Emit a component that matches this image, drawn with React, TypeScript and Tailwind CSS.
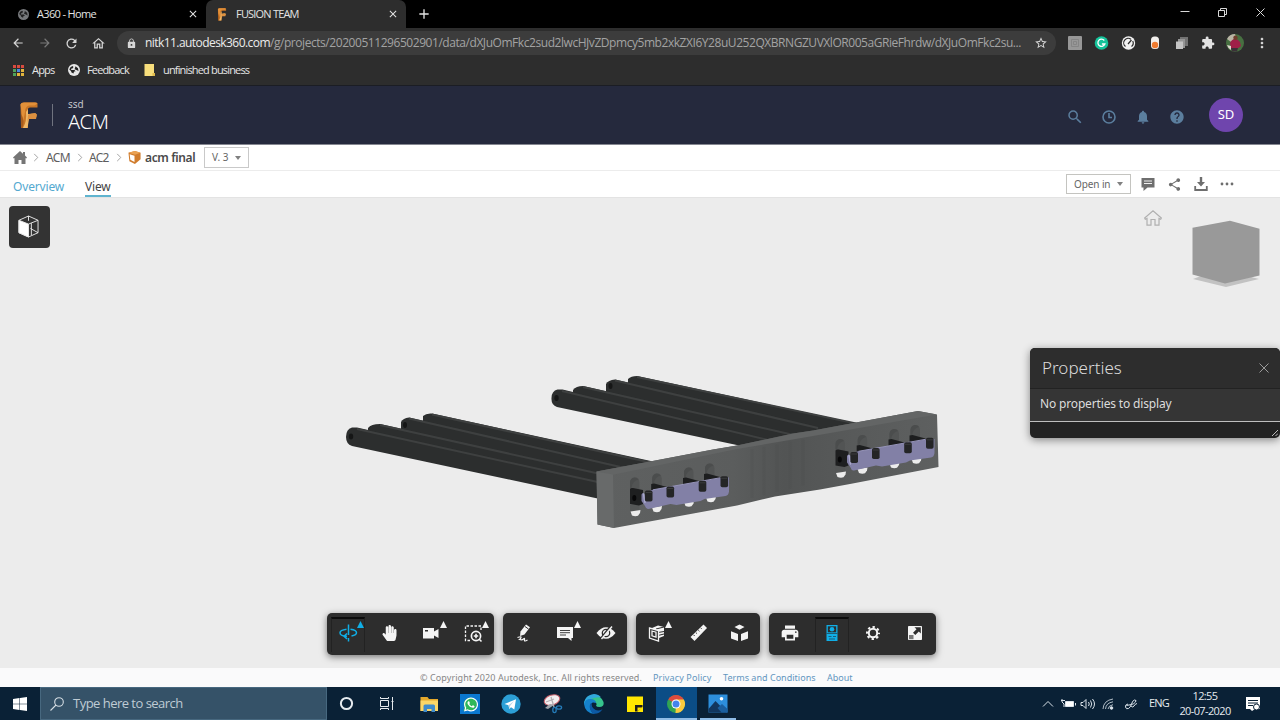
import React from "react";
import {
  MdArrowBack, MdArrowForward, MdRefresh, MdOutlineHome, MdLock, MdStarBorder, MdExtension, MdMoreVert,
  MdSearch, MdNotifications, MdHelp, MdShare, MdPrint, MdAdd, MdClose,
} from "react-icons/md";
import { FaHandPaper, FaWhatsapp } from "react-icons/fa";

const SEGOE = "font-['Open_Sans','Noto_Sans',sans-serif]";
const ADSK = "font-['Noto_Sans','Open_Sans',sans-serif]";

function Globe({ className }: { className: string }) {
  return (
    <svg viewBox="0 0 12 12" className={className}>
      <circle cx="6" cy="6" r="6" fill="currentColor" />
      <path d="M1.300 5.500Q2 2.500 4.500 2l1 1-1 1.500H3.500L3 6h3.500l1 1.500H6L5.500 9.500 3.500 8.500 3 7zM7.500 2.200l2.500 2L10.500 7 8.500 6l-2-.8.500-1.200z" fill="#222" />
    </svg>
  );
}

function FusionLogo({ className }: { className: string }) {
  return (
    <svg viewBox="0 0 18 27" className={className}>
      <path d="M.5 2.500Q1 .5 4 .5h11q2 0 2.500 1v4H10Q8 5.500 8 7v19H1z" fill="#c87627" />
      <path d="M.5 2.500Q1 .5 4 .5h11q2 0 2.500 1l-3 2H9Q5 4.500 5 10L3 20z" fill="#e29039" />
      <path d="M6 10l2-3v5l8-.5.5 3L9 17l-1.500 9H3Q7 19 6 10z" fill="#f0b868" />
      <path d="M8 12.500q4-1.500 7-1.500l2 1.500-1 4.500H9l-1.500 3z" fill="#dc9040" />
      <path d="M1 12Q5 18 2.500 26H1z" fill="#a85c1c" />
    </svg>
  );
}

function TabStrip() {
  return (
    <div className={`flex h-[28px] shrink-0 bg-black text-[11px] text-[#e3e3e3] ${SEGOE}`}>
      <div className="flex w-[206px] items-center pl-[18px] pr-[7px]">
        <Globe className="h-[11px] w-[11px] text-[#77797c]" />
        <span className="ml-[8px] flex-1 tracking-[-0.65px]">A360 - Home</span>
        <MdClose className="h-[12px] w-[12px]" />
      </div>
      <div className="flex w-[200px] items-center rounded-t-[7px] bg-[#2d2d2d] pl-[11px] pr-[7px]">
        <FusionLogo className="h-[13px] w-[10px]" />
        <span className="ml-[9px] flex-1 tracking-[-0.8px]">FUSION TEAM</span>
        <MdClose className="h-[12px] w-[12px]" />
      </div>
      <div className="flex flex-1 items-center pl-[10px]">
        <MdAdd className="h-[16px] w-[16px]" />
      </div>
      <svg viewBox="0 0 110 28" className="h-[28px] w-[110px]" fill="none" stroke="#d8d8d8">
        <path d="M10.500 11.500h9M48.500 10.500h6v6h-6zM50.500 10v-1.500h6v6h-2M86.500 8.500l8 8M94.500 8.500l-8 8" />
      </svg>
    </div>
  );
}

function AddressBar() {
  return (
    <div className={`flex h-[30px] shrink-0 items-center bg-[#2d2d2d] pl-[11px] text-[#d6d6d6] ${SEGOE}`}>
      <MdArrowBack className="h-[14px] w-[14px]" />
      <MdArrowForward className="ml-[13px] h-[14px] w-[14px] text-[#7a7a7a]" />
      <MdRefresh className="ml-[12px] h-[15px] w-[15px]" />
      <MdOutlineHome className="ml-[12px] h-[15px] w-[15px]" />
      <div className="ml-[11px] flex h-[24px] w-[939px] items-center rounded-full bg-[#3c3c3c] pl-[9px] pr-[8px]">
        <MdLock className="h-[11px] w-[11px]" />
        <span className="ml-[8px] w-[885px] whitespace-nowrap text-[12px] tracking-[-0.445px] text-[#a3a3a3]">
          <span className="tracking-[-0.56px] text-[#ececec]">nitk11.autodesk360.com</span>
          /g/projects/20200511296502901/data/dXJuOmFkc2sud2lwcHJvZDpmcy5mb2xkZXI6Y28uU252QXBRNGZUVXlOR005aGRieFhrdw/dXJuOmFkc2su...
        </span>
        <MdStarBorder className="ml-[4px] h-[14px] w-[14px] shrink-0" />
      </div>
      <svg viewBox="0 0 224 30" className="h-[30px] w-[224px]">
        <rect x="12" y="8" width="14" height="14" rx="1" fill="#979797" />
        <path d="M15.500 11.500h7v7h-7zM17.500 13.500h3v3h-3z" fill="none" stroke="#858585" />
        <circle cx="45.500" cy="15" r="6.800" fill="#15c39a" />
        <path d="M48.300 12.500a3.600 3.600 0 1 0 .6 3.500h-3" fill="none" stroke="#fff" strokeWidth="1.300" />
        <circle cx="72.500" cy="15" r="6.700" fill="#f2f2f2" />
        <path d="M69.500 18.500a4.500 4.500 0 0 1 5.500-7.200M76.700 13a4.500 4.500 0 0 1-1.200 5.500M72 16l3.500-4" fill="none" stroke="#2b2b2b" strokeWidth="1.200" />
        <rect x="95" y="8.500" width="8" height="12.500" rx="3.500" fill="#f1efec" />
        <circle cx="99" cy="17" r="3.200" fill="#ee7b30" />
        <path d="M124 9h8v9h-8z" fill="#737373" />
        <path d="M122 11h7v9h-7z" fill="#969696" />
        <path d="M120 13.500h7V21h-7z" fill="#c4c4c4" />
      </svg>
      <MdExtension className="-ml-[79px] h-[14px] w-[14px] text-[#e2e2e2]" />
      <svg viewBox="0 0 18 18" className="ml-[11px] h-[18px] w-[18px]">
        <circle cx="9" cy="9" r="9" fill="#477041" />
        <path d="M9 0a9 9 0 0 0-8 5l4 3 5-5z" fill="#b9b4a4" />
        <path d="M4 9q2-4 5-4t5 3l1 4-4 3H5z" fill="#a01f48" />
        <circle cx="9.500" cy="3.800" r="2.200" fill="#6e3d2c" />
        <path d="M1 11l4 1v4a8 8 0 0 1-4-5z" fill="#dfd7cf" />
        <path d="M5 14h7l-1 3.500H6z" fill="#3b3038" />
      </svg>
      <MdMoreVert className="ml-[10px] h-[16px] w-[16px] shrink-0" />
    </div>
  );
}

const APP_DOTS = ["#d94b3f", "#d94b3f", "#d94b3f", "#4fa45a", "#4a86e0", "#e3b53c", "#4fa45a", "#e3b53c", "#e3b53c"];

function Bookmarks() {
  return (
    <div className={`flex h-[28px] shrink-0 items-center border-b border-[#1b1d24] bg-[#2d2d2d] pb-[3px] pl-[13px] text-[11px] text-[#e6e6e6] ${SEGOE}`}>
      <svg viewBox="0 0 11 11" className="h-[11px] w-[11px]">
        {APP_DOTS.map((c, i) => (
          <rect key={i} x={(i % 3) * 4} y={Math.floor(i / 3) * 4} width="3" height="3" fill={c} />
        ))}
      </svg>
      <span className="ml-[8px] w-[36px] tracking-[-0.8px]">Apps</span>
      <Globe className="h-[12px] w-[12px] text-[#e6e6e6]" />
      <span className="ml-[7px] w-[57px] tracking-[-0.85px]">Feedback</span>
      <svg viewBox="0 0 11 12" className="h-[12px] w-[11px]">
        <path d="M.5 0H10v9l1 1v2H.5z" fill="#f7de7c" />
        <path d="M8.500 9H11v3H8.500z" fill="#dfba4c" />
      </svg>
      <span className="ml-[8px] tracking-[-0.84px]">unfinished business</span>
    </div>
  );
}

function AppHeader() {
  return (
    <header className={`flex h-[59px] shrink-0 items-center border-b border-[#858791] bg-[#25293d] pl-[20px] pr-[37px] ${ADSK}`}>
      <FusionLogo className="h-[27px] w-[18px]" />
      <div className="ml-[14px] h-[22px] w-px bg-[#70737f]" />
      <div className="ml-[15px] flex flex-1 flex-col">
        <span className="relative top-px text-[10px] leading-[13px] text-[#c3c5cc]">ssd</span>
        <span className="text-[20px] font-light leading-[23px] tracking-[-0.3px] text-white">ACM</span>
      </div>
      <div className="flex items-center gap-[18px] pt-[3px] text-[#5b7e9e]">
        <MdSearch className="h-[18px] w-[18px]" />
        <svg viewBox="0 0 16 16" className="-ml-px h-[16px] w-[16px]" fill="none" stroke="currentColor" strokeWidth="1.600">
          <circle cx="8" cy="8" r="6" />
          <path d="M8 4v4.500h3" />
        </svg>
        <MdNotifications className="h-[16px] w-[16px]" />
        <MdHelp className="h-[16px] w-[16px]" />
      </div>
      <div className="ml-[24px] flex h-[34px] w-[34px] items-center justify-center rounded-full bg-[#6f45ad] text-[13px] text-white">SD</div>
    </header>
  );
}

function Chevron() {
  return (
    <svg viewBox="0 0 6 10" className="h-[9px] w-[6px]" fill="none" stroke="#9a9a9a">
      <path d="M1 1l4 4-4 4" />
    </svg>
  );
}

function Caret() {
  return (
    <svg viewBox="0 0 6 4" className="h-[4px] w-[6px]">
      <path d="M0 0h6L3 4z" fill="#808080" />
    </svg>
  );
}

function Breadcrumb() {
  return (
    <nav className={`flex h-[26px] shrink-0 items-center border-b border-[#ececec] bg-white pl-[13px] text-[12px] text-[#5d5d5d] ${ADSK}`}>
      <svg viewBox="0 0 14 13" className="h-[13px] w-[14px]">
        <path d="M7 0l3 2.700V1h2v3.500L14 6.500l-.8.900L12.500 7v6H8.500V9h-3v4h-4V7l-.7.400L0 6.500z" fill="#757575" />
      </svg>
      <div className="ml-[6px] flex items-center"><Chevron /></div>
      <span className="ml-[7px] w-[25px] tracking-[-0.6px]">ACM</span>
      <div className="ml-[6px] flex items-center"><Chevron /></div>
      <span className="ml-[6px] w-[21px] tracking-[-0.7px]">AC2</span>
      <div className="ml-[6px] flex items-center"><Chevron /></div>
      <svg viewBox="0 0 13 14" className="ml-[6px] h-[13px] w-[13px]">
        <path d="M0 2L7 0l6 2v7l-6 5-6-3z" fill="#d07c2d" />
        <path d="M1.300 3.500L6.500 5v6.800L2 9.500z" fill="#fff" />
        <path d="M0 2l7 2 6-2-6-2z" fill="#eaa254" />
      </svg>
      <span className="ml-[4px] w-[50px] whitespace-nowrap font-semibold tracking-[-0.38px] text-[#4a4a4a]">acm final</span>
      <button className="ml-[9px] flex h-[21px] w-[45px] items-center justify-between border border-[#c9c9c9] px-[7px] text-[10px] text-[#666]">
        <span>V. 3</span>
        <Caret />
      </button>
    </nav>
  );
}

function PageTabs() {
  return (
    <div className={`flex h-[27px] shrink-0 border-b border-[#e3e3e3] bg-white pl-[13px] text-[12px] ${ADSK}`}>
      <div className="w-[51px] pt-[7px] tracking-[-0.15px] text-[#54a9d0]">Overview</div>
      <div className="ml-[21px] h-[26px] w-[26px] border-b-2 border-[#5fb4cf] pt-[7px] tracking-[-0.2px] text-[#444]">View</div>
      <div className="flex flex-1 items-center justify-end pr-[46px] text-[#6e6e6e]">
        <button className="mr-[10px] flex h-[20px] w-[65px] items-center justify-between border border-[#c4c4c0] px-[7px] text-[10px] tracking-[-0.1px] text-[#666]">
          <span>Open in</span>
          <Caret />
        </button>
        <svg viewBox="0 0 14 13" className="h-[13px] w-[14px]">
          <path d="M.5 0h13v9.500H6.500L2.500 13V9.500h-2z" fill="currentColor" />
          <path d="M3 3h8M3 5.500h8" stroke="#fff" strokeWidth=".9" />
        </svg>
        <MdShare className="ml-[12px] h-[15px] w-[15px]" />
        <svg viewBox="0 0 14 14" className="ml-[12px] h-[14px] w-[14px]" fill="currentColor">
          <path d="M5.800 0h2.400v5H11L7 9.500 3 5h2.800zM.3 9h1.800v3h9.800V9h1.800v5H.3z" />
        </svg>
        <svg viewBox="0 0 14 4" className="ml-[12px] h-[4px] w-[14px]" fill="currentColor">
          <circle cx="2" cy="2" r="1.400" /><circle cx="7" cy="2" r="1.400" /><circle cx="12" cy="2" r="1.400" />
        </svg>
      </div>
    </div>
  );
}

const SLOTS = [[634.5, 478], [656.7, 474], [688.5, 468], [709.5, 464]];
const LATCHES = [[648.7, 496], [670.3, 492], [702.5, 486.3], [724.3, 481.8]];
const PIN_ENDS = [[635.5, 512.5], [657, 508.5], [689, 503], [711, 498.5]];

function Clamp() {
  return (
    <g>
      {SLOTS.map(([x, y], i) => (
        <g key={x}>
          <path d={`M${x - 4.5} ${y + 16}v-11q0-5 4.500-5.500t5 5v11z`} fill="#525454" />
          <path d={`M${x - 4.5} ${y + 10}v-6q.5-4 4.500-4.500 2.500 0 4 2-6 1-7 8.500z`} fill="#4b4d4d" />
          {i > 0 && <path d={`M${x - 5.5} ${y + 10}l3-.5 13 3.500 2 5-18 1z`} fill="#1d1e1f" />}
        </g>
      ))}
      <path d="M630 505h9.500v6l-9.500 3z" fill="#555757" />
      {PIN_ENDS.map(([x, y]) => (
        <path key={x} d={`M${x - 5} ${y - 1}l10-1.500-.5 3-2 2.800q-3 .8-6-.3z`} fill="#ececec" />
      ))}
      <path d="M630 489q1-1.500 3-1l10 2v14l-4 1.500-9-1.500z" fill="#1e1f20" />
      <ellipse cx="634.300" cy="498" rx="2" ry="3" fill="#070708" />
      <path d="M641.500 494.500q1.500-3 3 0l7-4.500 68.500-12 9-.5v14q-.5 4-3.500 4.500l-21 3-4 2-24 4-6-1-22 5q-2.500.5-3.500-3l-3.500-5z" fill="#8280a6" />
      <path d="M643.500 494l1.500 8.500" stroke="#aaa9cc" strokeWidth="1.500" strokeLinecap="round" />
      <path d="M653 489.800l67-12" stroke="#9694b9" />
      {LATCHES.map(([x, y]) => (
        <g key={x}>
          <rect x={x - 3.8} y={y - 5.5} width="7.600" height="11" rx="1.800" fill="#242526" />
          <path d={`M${x - 3} ${y - 3.5}h6`} stroke="#3a3b3c" />
        </g>
      ))}
    </g>
  );
}

const BARS = [
  "M423 421v-5q3-3 9-2.500L660 463v30L430 440z|M432 414.500L655 463.500",
  "M401 432v-10q2-4 8-4.500L630 468v26L408 440z|M409 418.500L625 468",
  "M368 440v-12q3-4 12-4L610 475v18L375 440z|M380 425L605 475",
  "M346 437q0-8 6-9.500h5L600 482v17L352 446q-6-2-6-9z|M357 429L600 482.500",
  "M628 390v-11q3-3 9-3L860 424v18L640 400z|M637 377L856 423.500",
  "M606 392v-8q2-4 9-4.500L820 427v20L610 400z|M615 380.500L818 428",
  "M573 400v-10q3-4 10-4L800 435v14L580 402z|M583 387L796 435.500",
  "M551.500 398q0-7 6-8.500h5L770 439v13L557 407q-6-2-5.500-9z|M562 391L768 440",
];

function Model() {
  return (
    <svg viewBox="327 365 625 170" className="absolute left-[327px] top-[167px] h-[170px] w-[625px]">
      <defs>
        <linearGradient id="plate" x1="597" x2="938" y1="0" y2="0" gradientUnits="userSpaceOnUse">
          <stop offset="0" stopColor="#5f6161" /><stop offset=".4" stopColor="#5b5d5d" />
          <stop offset=".55" stopColor="#525454" /><stop offset=".75" stopColor="#585a5a" /><stop offset="1" stopColor="#5e6060" />
        </linearGradient>
      </defs>
      {BARS.map((b) => {
        const [body, edge] = b.split("|");
        return (
          <g key={b}>
            <path d={body} fill="#2c2e2e" />
            <path d={edge} stroke="#3e4040" strokeWidth="2" />
          </g>
        );
      })}
      <g fill="#151616">
        <ellipse cx="351" cy="436.500" rx="2.200" ry="3" /><ellipse cx="405" cy="425" rx="2" ry="3" />
        <ellipse cx="556.500" cy="398" rx="2.200" ry="3" /><ellipse cx="610.500" cy="386" rx="2" ry="3" />
      </g>
      <path d="M596.500 471.500L650 461.500 713 449.500 737 445.500 793 433.500 813 430.500 918 411l19 3.500 1.500 52.500L850 484l-30 5.500-45 7-38 9L614 528l-16.500-3.500z" fill="url(#plate)" />
      <path d="M596.500 471.500L650 461.500 713 449.500 737 445.500 793 433.500 813 430.500 918 411l19 3.500L813 436l-76 13-125 26z" fill="#636565" />
      <path d="M596.500 471.500L613 474.500l1 53.500-16.500-3.500z" fill="#686a6a" />
      {[752, 764, 777, 790, 803].map((x) => (
        <path key={x} d={`M${x} ${449 - (x - 752) * 0.19}v${49 - (x - 752) * 0.05}`} stroke="#494b4b" strokeWidth="3" opacity=".18" />
      ))}
      <Clamp />
      <g transform="translate(205.500 -38.500)"><Clamp /></g>
    </svg>
  );
}

function Tool({ children, active, flyout }: { children: React.ReactNode; active?: boolean; flyout?: boolean }) {
  return (
    <div className={`relative flex flex-1 items-center justify-center pb-[2px] ${active ? "text-[#10aee6]" : "text-[#f4f4f4]"}`}>
      {active && <div className="absolute inset-x-[4px] top-[4px] bottom-[3px] border-x border-t-2 border-x-[#222] border-t-[#0c0c0c]" />}
      <div className="relative flex h-[20px] w-[20px] items-center justify-center">{children}</div>
      {flyout && (
        <svg viewBox="0 0 7 7" className="absolute right-[5px] top-[8px] h-[7px] w-[7px]"><path d="M3.500 0L7 7H0z" fill="currentColor" /></svg>
      )}
    </div>
  );
}

const GROUP = "flex h-[42px] rounded-[5px] bg-[#2d2d2d] shadow-[0_2px_7px_rgba(0,0,0,0.5)]";
const ICON = "h-[20px] w-[20px]";

function Toolbar() {
  return (
    <div className="absolute left-[327px] top-[415px] flex gap-[9px]">
      <div className={`${GROUP} w-[167px]`}>
        <Tool active flyout>
          <svg viewBox="0 0 20 20" className={ICON} fill="none" stroke="currentColor" strokeWidth="1.500">
            <path d="M10.500 1.500v10.500M10.500 15v3.500M8.500 6.300C5 6.800 2 8 2 9.800c0 2 3 3.400 7 3.500M12.500 6.300c3.500.5 6 1.700 6 3.500 0 1.500-2 2.700-5 3.200M9 10.500L6 13.300l3 2.600" />
          </svg>
        </Tool>
        <Tool><FaHandPaper className="h-[16px] w-[15px]" /></Tool>
        <Tool flyout>
          <svg viewBox="0 0 20 20" className={ICON} fill="currentColor">
            <path fillRule="evenodd" d="M2 5h11v3.500L17.500 6v9L13 12.500v3H2zM4 7v1.500h3V7z" />
          </svg>
        </Tool>
        <Tool flyout>
          <svg viewBox="0 0 20 20" className={ICON} fill="none" stroke="currentColor" strokeWidth="1.300">
            <path d="M7 17.500H2.500V3h15.500v4" strokeDasharray="2.500 1.500" />
            <circle cx="13" cy="13" r="4.600" strokeWidth="1.700" />
            <path d="M10.800 13h4.400M13 10.800v4.400M16 16l2.500 2.500" strokeWidth="1.600" />
          </svg>
        </Tool>
      </div>
      <div className={`${GROUP} w-[124px]`}>
        <Tool>
          <svg viewBox="0 0 20 20" className={ICON}>
            <path d="M12 1.500l4 2.800-5.500 7.200-4.500 1.500.5-4.500z" fill="currentColor" />
            <path d="M11 3.500l3.500 2.500" stroke="#2d2d2d" />
            <path d="M3.500 14.500q4-1.500 3.500 0t-1.500 2q2.500 1 4-.5t1 .8 3 .2" fill="none" stroke="currentColor" strokeWidth="1.200" />
          </svg>
        </Tool>
        <Tool flyout>
          <svg viewBox="0 0 20 20" className={ICON}>
            <path d="M2 4h16v11h-1.500v3l-3.500-3H2z" fill="currentColor" />
            <path d="M5 7.500h10M5 9.700h10M5 12h6" stroke="#2d2d2d" strokeWidth=".9" />
          </svg>
        </Tool>
        <Tool>
          <svg viewBox="0 0 20 20" className={ICON}>
            <path d="M.5 10Q5 4.200 10 4.200T19.500 10Q15 15.800 10 15.800T.5 10z" fill="currentColor" />
            <circle cx="10" cy="10" r="3.700" fill="none" stroke="#2d2d2d" strokeWidth="1.300" />
            <path d="M4.500 16L15 3" stroke="#2d2d2d" strokeWidth="2" /><path d="M5.500 16L16 3.500" stroke="currentColor" strokeWidth="1.400" />
          </svg>
        </Tool>
      </div>
      <div className={`${GROUP} w-[124px]`}>
        <Tool flyout>
          <svg viewBox="0 0 20 20" className={ICON}>
            <path d="M5 5l6-2.500 6 1.500v9l-5 2-7-3z" fill="currentColor" />
            <path d="M9 6l8-2M11 9.500l6-1M11 12.500l6-1.500" stroke="#2d2d2d" />
            <path d="M2.500 5l9 2.500V18l-9-3z" fill="#2d2d2d" stroke="currentColor" strokeWidth="1.300" />
            <path d="M5 8l4 1.200v5l-4-1.300z" fill="none" stroke="currentColor" strokeWidth="1.300" />
          </svg>
        </Tool>
        <Tool>
          <svg viewBox="0 0 20 20" className={ICON}>
            <path d="M15.500 1.500L19 5 6.500 18l-4-4z" fill="currentColor" />
            <path d="M5.500 11.800l1.200 1.200M7.800 9.500L9 10.700M10.200 7l1.300 1.300M12.500 4.700l1.200 1.200" stroke="#2d2d2d" strokeWidth=".9" />
          </svg>
        </Tool>
        <Tool>
          <svg viewBox="0 0 20 20" className={ICON} fill="currentColor">
            <path d="M10.500 1.500l5 2.400-5 2.800-5-2.800zM2 8.300L9 11v7l-7-2.500zM19 8.300L12 11v7l7-2.500z" />
          </svg>
        </Tool>
      </div>
      <div className={`${GROUP} w-[167px]`}>
        <Tool><MdPrint className="h-[20px] w-[20px]" /></Tool>
        <Tool active>
          <svg viewBox="0 0 20 20" className={ICON}>
            <path d="M4.500 2h11v16h-11z" fill="currentColor" />
            <path d="M5.800 3.300h8.400v6H5.800z" fill="#2d2d2d" />
            <circle cx="10" cy="6.300" r="2.300" fill="currentColor" />
            <path d="M4.500 10.500h11M6.500 13.500h3M11 13.500h3M7 16h6" stroke="#20475a" strokeWidth=".8" />
          </svg>
        </Tool>
        <Tool>
          <svg viewBox="0 0 20 20" className={ICON} fill="none" stroke="currentColor">
            <circle cx="10" cy="10" r="4.200" strokeWidth="2" />
            <circle cx="10" cy="10" r="6" strokeWidth="2" strokeDasharray="2.360 2.350" strokeDashoffset="1.180" />
          </svg>
        </Tool>
        <Tool>
          <svg viewBox="0 0 20 20" className={ICON}>
            <path d="M3.500 3.500h13v13h-13z" fill="#f4f4f4" stroke="#f4f4f4" strokeWidth="1" />
            <path d="M9.500 4.200h6.300v6.300l-2-2-3.500 3.500-2.300-2.300L11.500 6.200z" fill="#2d2d2d" />
            <path d="M4 12h4.500v4.200H4z" fill="#777" />
          </svg>
        </Tool>
      </div>
    </div>
  );
}

function PropertiesPanel() {
  return (
    <div className={`absolute right-0 top-[150px] flex h-[90px] w-[250px] flex-col overflow-hidden rounded-[5px] bg-[#222] text-[#dcdcdc] shadow-[0_2px_8px_rgba(0,0,0,0.45)] ${ADSK}`}>
      <div className="flex h-[41px] items-center justify-between border-b border-[#222] bg-[#2d2d2d] pb-px pl-[12px] pr-[11px]">
        <span className="text-[17px] font-light">Properties</span>
        <svg viewBox="0 0 10 10" className="h-[10px] w-[10px]" stroke="#9b9b9b"><path d="M.5.5l9 9M9.500.5l-9 9" /></svg>
      </div>
      <div className="flex h-[33px] items-center border-b border-[#bdbdbd] bg-[#353535] pb-[3px] pl-[10px] text-[12px] tracking-[-0.16px]">No properties to display</div>
      <div className="flex flex-1 items-end justify-end p-[2px]">
        <svg viewBox="0 0 6 6" className="h-[6px] w-[6px]" stroke="#bbb"><path d="M0 6l6-6M3.500 6L6 3.500" /></svg>
      </div>
    </div>
  );
}

function Viewer() {
  return (
    <main className="relative h-[470px] shrink-0 overflow-hidden bg-[#ececec]">
      <Model />
      <div className="absolute left-[9px] top-[8px] flex h-[42px] w-[41px] items-center justify-center rounded-[4px] bg-[#333] pb-[2px] pr-[2px]">
        <svg viewBox="0 0 22 24" className="h-[23px] w-[21px]" fill="none" stroke="#e8e8e8" strokeWidth="1">
          <path d="M1 5.500L11 1l10 4.500v13L11 23 1 18.500zM11 1v5M21 18.500L13 14M11 9.500l10-4M14 8.500v12.500" />
          <path d="M1 5.500l10 4V23L1 18.500z" fill="#fff" />
        </svg>
      </div>
      <svg viewBox="0 0 18 16" className="absolute left-[1144px] top-[12px] h-[16px] w-[18px]" fill="none" stroke="#b0b0b0" strokeWidth="1.200">
        <path d="M3 8.500L1.300 9.300.7 8 9 .8 17.300 8l-.6 1.300L15 8.500v6.700h-4V9.500H7v5.700H3z" />
      </svg>
      <svg viewBox="0 0 70 70" className="absolute left-[1191px] top-[21px] h-[70px] w-[70px]">
        <path d="M2 60l8-3 24 4 26-3 8 2-33 8z" fill="#c2c2c2" />
        <path d="M1.500 8.700L39 1.700l29.500 8V56.500L34 64.500 1.500 55.500z" fill="#999" />
      </svg>
      <PropertiesPanel />
      <Toolbar />
    </main>
  );
}

function Footer() {
  return (
    <footer className={`flex h-[19px] shrink-0 items-center bg-[#fafafb] pl-[420px] text-[9px] text-[#6296bf] ${ADSK}`}>
      <span className="w-[233px] whitespace-nowrap tracking-[0.08px] text-[#868686]">© Copyright 2020 Autodesk, Inc. All rights reserved.</span>
      <span className="w-[70px] tracking-[0.12px]">Privacy Policy</span>
      <span className="w-[104px] tracking-[0.02px]">Terms and Conditions</span>
      <span>About</span>
    </footer>
  );
}

function TaskbarApp({ children, state }: { children: React.ReactNode; state?: "active" | "open" }) {
  return (
    <div className={`flex h-[33px] w-[41.300px] items-center justify-center ${state === "active" ? "border-b-2 border-[#8fbce6] bg-[#0b4d86] pt-[2px]" : state === "open" ? "border-b-2 border-[#8fbce6] pt-[2px]" : ""}`}>
      <svg viewBox="0 0 20 20" className="h-[20px] w-[20px]">{children}</svg>
    </div>
  );
}

function Taskbar() {
  return (
    <div className={`flex h-[33px] shrink-0 items-center bg-[#0a2136] text-[#e6ebef] ${SEGOE}`}>
      <div className="flex w-[40px] justify-center">
        <svg viewBox="0 0 14 14" className="h-[14px] w-[14px]" fill="#fff"><path d="M0 2l6.500-1v5.700H0zM7 .9L14 0v6.700H7zM0 7.200h6.500V13L0 12zM7 7.200h7V14l-7-.9z" /></svg>
      </div>
      <div className="flex h-[33px] w-[287px] items-center border border-[#47687f] bg-[#355268] pl-[9px]">
        <svg viewBox="0 0 14 14" className="h-[14px] w-[14px]" fill="none" stroke="#d5dde3" strokeWidth="1.100"><circle cx="9" cy="5" r="4.300" /><path d="M6 8L.5 13.500" /></svg>
        <span className="ml-[9px] text-[13px] tracking-[-0.52px] text-[#bfcbd4]">Type here to search</span>
      </div>
      <div className="flex w-[81px] items-center">
        <svg viewBox="0 0 81 33" className="h-[33px] w-[81px]" fill="none" stroke="#e6ebef">
          <circle cx="19.500" cy="16.500" r="5.600" strokeWidth="2" />
          <path d="M53.500 13.500h8v6h-8zM53.500 10v1.500h8V10M53.500 23v-1.500h8V23M65.500 10v13M64.500 14.500h2" strokeWidth="1" />
        </svg>
      </div>
      <TaskbarApp>
        <path d="M1.500 3h7l1.500 2h9v12H1.500z" fill="#e5a92c" /><path d="M1.500 6.500h17.500V17H1.500z" fill="#fbd768" />
        <path d="M4.500 18v-6q0-1.500 1.500-1.500h8.500q1.500 0 1.500 1.500v6h-3.500v-3H8v3z" fill="#3f8ccc" />
      </TaskbarApp>
      <TaskbarApp>
        <rect width="20" height="20" fill="#0b78d0" />
        <path d="M3.500 17l1-4a6.500 6.500 0 1 1 2.500 2.700z" fill="#2fb85a" />
        <FaWhatsapp x="3" y="2.500" width="14" height="14" color="#fff" />
      </TaskbarApp>
      <TaskbarApp>
        <circle cx="10" cy="10" r="9.700" fill="#2c9fd6" />
        <path d="M3.500 10L15 5.300 13.300 15.500l-3.300-2.300-1.700 1.700-.8-3.600z" fill="#fff" /><path d="M7.500 11.300L13 7l-4 5-.7 2.900z" fill="#b7d5e8" />
      </TaskbarApp>
      <TaskbarApp>
        <ellipse cx="9" cy="6" rx="8" ry="5" fill="#f3eff0" stroke="#c9606a" transform="rotate(-18 9 6)" />
        <path d="M3 8l8-3M8 3l3 10" stroke="#b3aeb2" strokeWidth="1.300" />
        <path d="M7 10l-5 4 3 1 6-4z" fill="#9ea4ab" />
        <ellipse cx="11.500" cy="16" rx="1.700" ry="2.600" fill="none" stroke="#257bb8" strokeWidth="1.300" /><ellipse cx="16" cy="13.500" rx="2.600" ry="1.700" fill="none" stroke="#257bb8" strokeWidth="1.300" />
      </TaskbarApp>
      <TaskbarApp>
        <path d="M0 10A10 10 0 0 1 19.500 8q1 4.500-4 5-3 0-3.500-1.200 1.500-2-1-4.300Q6 4 0 10z" fill="#36c48d" />
        <path d="M0 10A10 10 0 0 1 12 .3q3 .7 5 3Q8 3 4 7z" fill="#31a9dc" />
        <path d="M0 10q1-5 6.500-5 5 0 5.500 4-5-2-6 3-.5 5 5 8Q1 19.500 0 10z" fill="#1581cb" />
        <path d="M6.500 9.500Q4 15 9 19.700q6 .8 9.500-4.400Q13 18 9.500 14.500 7 12 8 9z" fill="#0c59a4" />
      </TaskbarApp>
      <TaskbarApp>
        <path d="M2 2.500h16V18H2z" fill="#ffe600" />
        <path d="M10 11h7.500v2L12.500 17.500H10z" fill="#1d1d1d" />
        <path d="M12.500 17.500V13.500h5z" fill="#ffe600" />
      </TaskbarApp>
      <TaskbarApp state="active">
        <circle cx="10" cy="10" r="9" fill="#31a352" />
        <path d="M10 10L2.200 5.500A9 9 0 0 1 17.800 5.500z" fill="#dd4a3d" />
        <path d="M10 10V5.500h7.800A9 9 0 0 1 10 19l-.5-.1z" fill="#f9ca3e" />
        <circle cx="10" cy="10" r="4.500" fill="#fff" /><circle cx="10" cy="10" r="3.500" fill="#4484ec" />
      </TaskbarApp>
      <div className="ml-[3px] flex [&>div]:w-[36px]">
        <TaskbarApp state="open">
          <path d="M.5.500h19v18H.5z" fill="#2d8fdd" /><path d="M.5 15L7.500 7l11 11.500H.5z" fill="#12365e" /><path d="M9.500 14l4.500-4 5.500 5v3.500h-6z" fill="#1b5f9f" /><circle cx="13.500" cy="4.800" r="1.800" fill="#fff" />
        </TaskbarApp>
      </div>
      <div className="flex-1" />
      <svg viewBox="0 0 100 20" className="mr-[8px] h-[20px] w-[100px]" fill="none" stroke="#dbe3ea" strokeWidth="1">
        <path d="M2 12.500L7 7.500l5 5" />
        <path d="M24.500 7.500h8v5h-8z" fill="#fff" /><path d="M34.500 9v2.500M20 6.500h4M21 5v3l2 2v3" />
        <path d="M40 8.500h2l3-3v9l-3-3h-2zM47.500 8q1.500 2 0 4M49.500 6.500q2.500 3.500 0 7M51.500 5q4 5 0 10" />
        <path d="M62 15Q62.500 6.500 72 5M64.500 15Q65 9 72 7.800M67 15Q67.500 11.500 72 10.700" opacity=".8" /><circle cx="70.500" cy="14" r="1.300" fill="#dbe3ea" />
        <path d="M87 10q-3 .5-2.500 3t3 1.500q2-1 3-4.500t3-4q2.500 0 1 2t-4 2.500l-5 1M90 12q2 2 3 0t3-2.500" />
      </svg>
      <span className="w-[20px] text-[11px] tracking-[-0.8px]">ENG</span>
      <div className="ml-[9px] flex w-[54px] flex-col items-center text-[11px] leading-[14.500px] tracking-[-0.62px]">
        <span>12:55</span>
        <span>20-07-2020</span>
      </div>
      <svg viewBox="0 0 14 14" className="ml-[14px] mr-[20px] h-[14px] w-[14px]">
        <path d="M0 0h14v12H9l-3 2-2-2H0z" fill="#fff" /><path d="M2 3.500h10M2 6h10M2 8.500h5" stroke="#0a2136" /><circle cx="10.500" cy="10" r="3" fill="#fff" stroke="#0a2136" />
      </svg>
    </div>
  );
}

export default function App() {
  return (
    <div className="flex h-[720px] w-[1280px] flex-col overflow-hidden bg-white">
      <TabStrip />
      <AddressBar />
      <Bookmarks />
      <AppHeader />
      <Breadcrumb />
      <PageTabs />
      <Viewer />
      <Footer />
      <Taskbar />
    </div>
  );
}
